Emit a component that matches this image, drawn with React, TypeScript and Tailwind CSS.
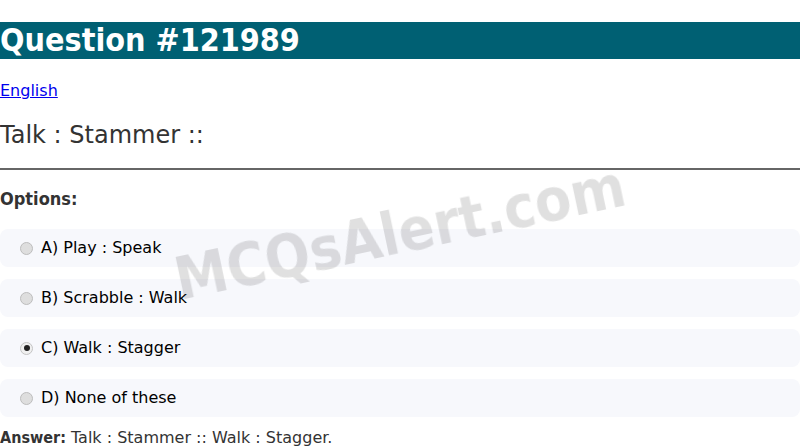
export default function App() {
  const options = [
    { key: 'a', label: 'A) Play : Speak', checked: false },
    { key: 'b', label: 'B) Scrabble : Walk', checked: false },
    { key: 'c', label: 'C) Walk : Stagger', checked: true },
    { key: 'd', label: 'D) None of these', checked: false },
  ]

  return (
    <div className="relative min-h-[448px] bg-white font-['DejaVu_Sans',sans-serif] text-base text-black">
      <h1 className="mt-[22px] h-[37px] bg-[#006073] text-[32px] leading-[37px] font-bold text-white font-['DejaVu_Sans_Condensed','DejaVu_Sans',sans-serif]">
        Question #121989
      </h1>

      <p className="mt-[22px] leading-[19px]">
        <a href="#" className="text-[#0000ee] underline">English</a>
      </p>

      <h2 className="mt-[21px] text-[24px] leading-[28px] text-[#333]">
        Talk : Stammer ::
      </h2>

      <hr className="mt-[19px] border-t-2 border-[#666]" />

      <h3 className="mt-[18px] text-[18px] leading-[21px] font-bold text-[#333] font-['DejaVu_Sans_Condensed','DejaVu_Sans',sans-serif]">
        Options:
      </h3>

      <div className="mt-[20px] flex flex-col gap-3">
        {options.map(o => (
          <label key={o.key} className="flex h-[38px] items-center gap-2 rounded-lg bg-[#f7f8fc] pl-5">
            {o.checked ? (
              <span className="flex h-[13px] w-[13px] items-center justify-center rounded-full border border-[#c4c4c4] bg-[#f0f0f0]">
                <span className="h-[6px] w-[6px] rounded-full bg-[#222]" />
              </span>
            ) : (
              <span className="h-[13px] w-[13px] rounded-full border border-[#bdbdbd] bg-[#dedede]" />
            )}
            <span>{o.label}</span>
          </label>
        ))}
      </div>

      <p className="mt-[11px] leading-[19px] text-[#333]">
        <strong className="font-bold font-['DejaVu_Sans_Condensed','DejaVu_Sans',sans-serif]">Answer:</strong> Talk : Stammer :: Walk : Stagger.
      </p>

      {/* watermark */}
      <div className="pointer-events-none fixed left-1/2 top-[52%] -translate-x-1/2 -translate-y-1/2 -rotate-[12deg] whitespace-nowrap text-[59px] font-bold font-['DejaVu_Sans_Condensed','DejaVu_Sans',sans-serif] text-[rgba(0,0,0,0.12)] select-none">
        MCQsAlert.com
      </div>
    </div>
  )
}
